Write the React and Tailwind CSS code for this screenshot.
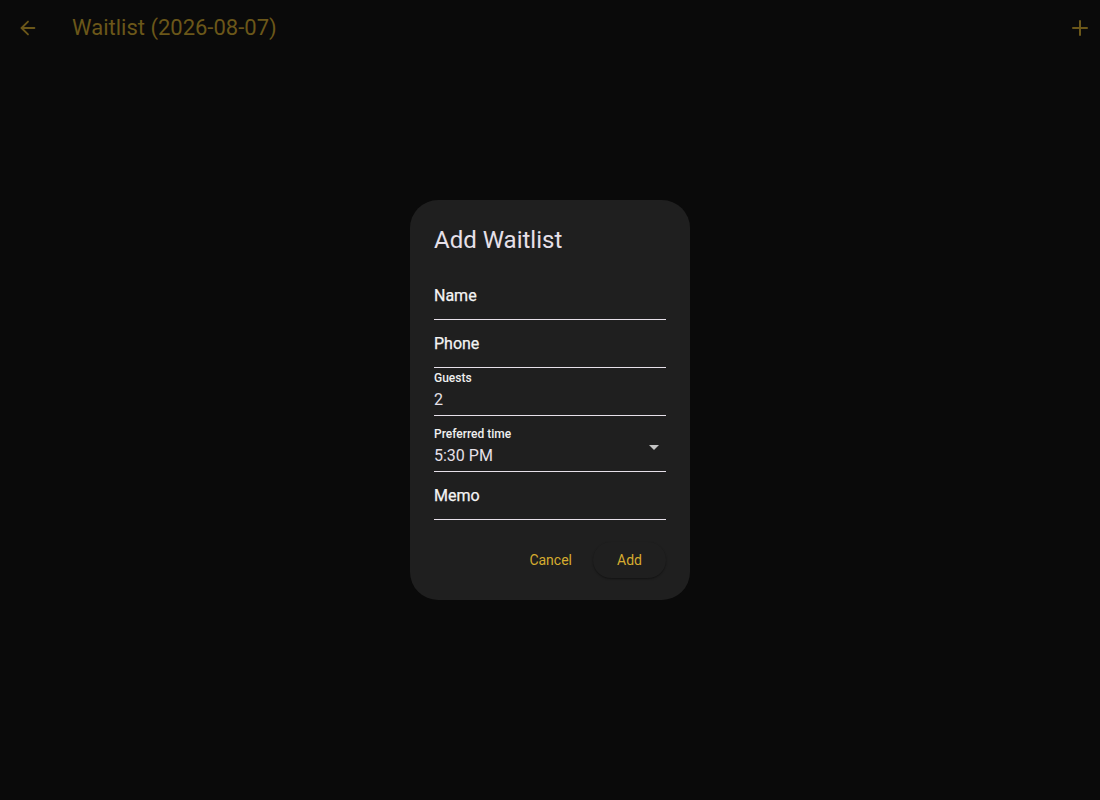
import React from 'react';
import { ArrowLeft, Plus } from 'lucide-react';

const TextField = ({ label, value, dropdown }) => {
    if (value === undefined) {
        return (
            <div className="h-12 flex items-center border-b border-[#e6e0e9]">
                <span className="text-base text-[#f4f4f4] leading-6 [-webkit-text-stroke:0.25px_#f4f4f4]">{label}</span>
            </div>
        );
    }
    return (
        <div className={`relative flex flex-col border-b border-[#e6e0e9] ${dropdown ? 'h-14 pt-[10px]' : 'h-12 pt-[2px]'}`}>
            <span className="text-xs leading-4 text-[#f0f0f0] font-medium">{label}</span>
            <span className="mt-[2px] text-base leading-6 text-[#e6e0e9]">{value}</span>
            {dropdown && (
                <svg className="absolute right-[6px] top-[29px]" width="12" height="6" viewBox="0 0 12 6">
                    <path d="M1 0 L11 0 L6 5 Z" fill="#c4c4c4" />
                </svg>
            )}
        </div>
    );
};

const App = () => {
    return (
        <div className="w-[1100px] h-[800px] bg-[#0a0a0a] relative overflow-hidden" style={{ fontFamily: 'Roboto, "Noto Sans", sans-serif' }}>
            <header className="h-14 flex items-center pl-4 pr-2 text-[#6b5719]">
                <button className="w-6 h-6 flex items-center justify-center">
                    <ArrowLeft size={22} strokeWidth={2} />
                </button>
                <h1 className="ml-8 text-[22px] leading-7">Waitlist (2026-08-07)</h1>
                <div className="flex-1" />
                <button className="w-6 h-6 flex items-center justify-center">
                    <Plus size={24} strokeWidth={2} />
                </button>
            </header>

            <div className="absolute inset-0 flex items-center justify-center">
                <div className="w-[280px] h-[400px] bg-[#1f1f1f] rounded-[28px] px-6 pt-6 flex flex-col">
                    <h2 className="text-2xl leading-8 text-[#e6e0e9]">Add Waitlist</h2>
                    <div className="mt-4 flex flex-col">
                        <TextField label="Name" />
                        <TextField label="Phone" />
                        <TextField label="Guests" value="2" />
                        <TextField label="Preferred time" value="5:30 PM" dropdown />
                        <TextField label="Memo" />
                    </div>
                    <div className="mt-5 flex justify-end items-center gap-[9px]">
                        <button className="h-10 px-3 rounded-full text-sm text-[#d6ac2f]">Cancel</button>
                        <button className="h-9 w-[73px] rounded-full text-sm text-[#d6ac2f] bg-[#1f1f1f] shadow-[0_1px_2px_rgba(0,0,0,0.4)]">Add</button>
                    </div>
                </div>
            </div>
        </div>
    );
};

export default App;
